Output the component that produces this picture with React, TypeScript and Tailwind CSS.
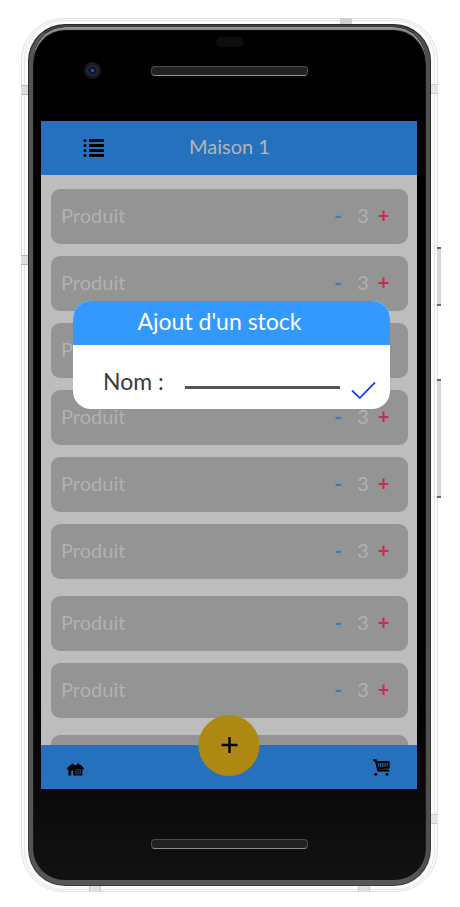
import React from "react";

const groups = [[1, 2, 3, 4, 5, 6], [7, 8]];

function Speaker() {
  return (
    <div className="h-[10px] w-full rounded-[4px] border border-b-[#8c8c8c] border-[#4a4a4a] bg-[#222222]" />
  );
}

function ProductRow() {
  return (
    <li className="flex h-[55px] items-center rounded-[9px] bg-[#949494] pr-[17px] pb-1 pl-[10px] text-xl leading-6 text-[#b1b1b1]">
      <span className="flex-1">Produit</span>
      <button type="button" aria-label="Retirer" className="w-4 text-center font-bold text-[#3a7ab8]">
        -
      </button>
      <span className="w-[30px] pl-1 text-center">3</span>
      <button type="button" aria-label="Ajouter" className="w-[15px] text-center font-bold text-[#c22d55]">
        +
      </button>
    </li>
  );
}

function ListIcon() {
  return (
    <svg width="22" height="20" viewBox="0 0 22 20" aria-hidden="true">
      {[2.5, 7.5, 12.5, 17.5].map((y) => (
        <g key={y}>
          <circle cx="2" cy={y} r="1.5" />
          <rect x="6" y={y - 1.5} width="15" height="3" rx="0.5" />
        </g>
      ))}
    </svg>
  );
}

function HouseIcon() {
  return (
    <svg width="17" height="13" viewBox="0 0 17 13" aria-hidden="true">
      <path d="M5.3 0.6 0.2 5v1.4h1.2v6h2.8V7.4h2v5h9.2V6.4h1.2V5l-2.6-3h-1.6V0.4h-2V2H7.6Z" />
      <path d="M8.8 6.6h4.8v4.2H8.8ZM11.2 6.6v4.2M8.8 8.7h4.8" fill="none" stroke="#2671be" strokeWidth="0.5" />
    </svg>
  );
}

function CartIcon() {
  return (
    <svg width="17" height="17" viewBox="0 0 17 17" fill="none" stroke="#000" aria-hidden="true">
      <path d="M0 1.3h2.8l2.4 10.3h11" strokeWidth="2" />
      <path d="M3.4 3h12.2v5.5L4.8 9.3" strokeWidth="2" />
      <path d="M6.3 3v6M8.6 3v6M10.9 3v6M13.2 3v6" strokeWidth="1.1" />
      <circle cx="2.8" cy="15.2" r="1.5" fill="#000" stroke="none" />
      <circle cx="14" cy="15.2" r="1.5" fill="#000" stroke="none" />
    </svg>
  );
}

function SideButton({ className }: { className: string }) {
  return (
    <div className={`absolute -right-1 w-1 border-y-2 border-[#666666] bg-[#d8d6d8] ${className}`} />
  );
}

function AddDialog() {
  return (
    <form
      role="dialog"
      aria-labelledby="dialog-title"
      className="absolute top-[180px] right-[27px] left-8 overflow-hidden rounded-[18px] bg-white"
      onSubmit={(e) => e.preventDefault()}
    >
      <h2 id="dialog-title" className="h-11 bg-[#3399ff] pr-6 text-center text-[23px] leading-10 text-white">
        Ajout d'un stock
      </h2>
      <div className="flex h-16 items-start pr-[14px] pl-[30px]">
        <label htmlFor="nom" className="w-[82px] pt-[22px] text-[23px] leading-7 text-[#3a3a3a]">
          Nom :
        </label>
        <input
          id="nom"
          type="text"
          className="h-11 min-w-0 flex-1 border-b-[3px] border-[#555555] bg-transparent text-xl outline-none"
        />
        <button type="submit" aria-label="Valider" className="mt-9 ml-[11px]">
          <svg width="25" height="19" viewBox="0 0 25 19" fill="none" stroke="#2448ee" strokeWidth="1.8" aria-hidden="true">
            <path d="M1 9.5 8.8 17 24 1.5" />
          </svg>
        </button>
      </div>
    </form>
  );
}

export default function App() {
  return (
    <div className="bg-white pt-[18px] pr-[22px] pb-[15px] pl-[21px] font-['Lato',sans-serif]">
      <div className="relative rounded-[42px] border border-[#e3e3e3] bg-[#fafafa] px-[2px] py-px">
        <div className="absolute -top-px left-[318px] h-[6px] w-3 bg-[#cfcfcf]" />
        <div className="absolute top-[66px] -left-px h-[10px] w-[7px] border-y border-[#bbbbbb] bg-[#dddddd]" />
        <div className="absolute top-[236px] -left-px h-[10px] w-[7px] border-y border-[#bbbbbb] bg-[#dddddd]" />
        <div className="absolute top-[65px] -right-px h-[10px] w-[7px] border-y border-[#cccccc] bg-[#e4e4e4]" />
        <div className="absolute right-[-1px] bottom-[67px] h-[10px] w-[7px] border-y border-[#cccccc] bg-[#e4e4e4]" />
        <div className="absolute -bottom-px left-[67px] h-[6px] w-3 border-x border-[#c6c6c6] bg-[#e0e0e0]" />
        <div className="absolute right-[67px] -bottom-px h-[6px] w-3 border-x border-[#c6c6c6] bg-[#e0e0e0]" />
        <SideButton className="top-[228px] h-[59px]" />
        <SideButton className="top-[360px] h-[119px]" />

        <div className="rounded-[39px] border border-[#e6e6e6] px-[3px] py-[3px]">
          <div className="rounded-[37px] bg-linear-to-b from-[#2a2a2a] to-[#3c3c3c] p-px">
            <div className="rounded-[36px] border-x-4 border-t-2 border-b-[5px] border-t-[#3f3f3f] border-r-[#505050] border-b-[#575757] border-l-[#555555] bg-linear-to-b from-black from-50% to-[#121212] pt-[3px] shadow-[inset_0_3px_1px_#8f9190]">
              <div className="h-[91px] pt-[7px]">
                <div className="mx-auto h-[10px] w-7 rounded-full bg-[#0d0d10]" />
                <div className="mt-[15px] grid grid-cols-[1fr_157px_1fr] items-center">
                  <div className="flex size-[17px] items-center justify-center justify-self-center rounded-full bg-[#19191b]">
                    <div className="flex size-[11px] items-center justify-center rounded-full border border-[#2c3558] bg-[#101735]">
                      <div className="size-[3px] rounded-full bg-[#3e5c88]" />
                    </div>
                  </div>
                  <Speaker />
                </div>
              </div>

              <div className="relative mr-[9px] ml-2 bg-[#bdbdbd]">
                <header className="grid h-[54px] grid-cols-[1fr_auto_1fr] items-center bg-[#2671be] pl-px">
                  <button type="button" aria-label="Menu" className="ml-[41px] justify-self-start">
                    <ListIcon />
                  </button>
                  <h1 className="pb-1 text-xl leading-6 text-[#b5b5b5]">Maison 1</h1>
                </header>

                <main className="flex flex-col gap-[17px] pt-[14px] pr-[9px] pl-[10px]">
                  {groups.map((rows, i) => (
                    <ul key={i} className="flex flex-col gap-3">
                      {rows.map((row) => (
                        <ProductRow key={row} />
                      ))}
                    </ul>
                  ))}
                  <div className="h-[10px] rounded-t-[9px] bg-[#949494]" />
                </main>

                <nav className="relative flex h-11 items-center justify-between bg-[#2671be] pr-[27px] pl-[26px]">
                  <a href="#maison" aria-label="Maison" className="pt-1">
                    <HouseIcon />
                  </a>
                  <a href="#courses" aria-label="Courses">
                    <CartIcon />
                  </a>
                  <button
                    type="button"
                    aria-label="Ajouter un stock"
                    className="absolute -top-[30px] left-1/2 flex size-[61px] -translate-x-1/2 items-center justify-center rounded-full bg-[#ad8912] pb-[2px]"
                  >
                    <svg width="18" height="18" viewBox="0 0 18 18" stroke="#000" strokeWidth="2.4" aria-hidden="true">
                      <path d="M9 1v16M1 9h16" />
                    </svg>
                  </button>
                </nav>

                <AddDialog />
              </div>

              <div className="flex h-[91px] justify-center pt-[50px]">
                <div className="w-[157px]">
                  <Speaker />
                </div>
              </div>
            </div>
          </div>
        </div>
      </div>
    </div>
  );
}
